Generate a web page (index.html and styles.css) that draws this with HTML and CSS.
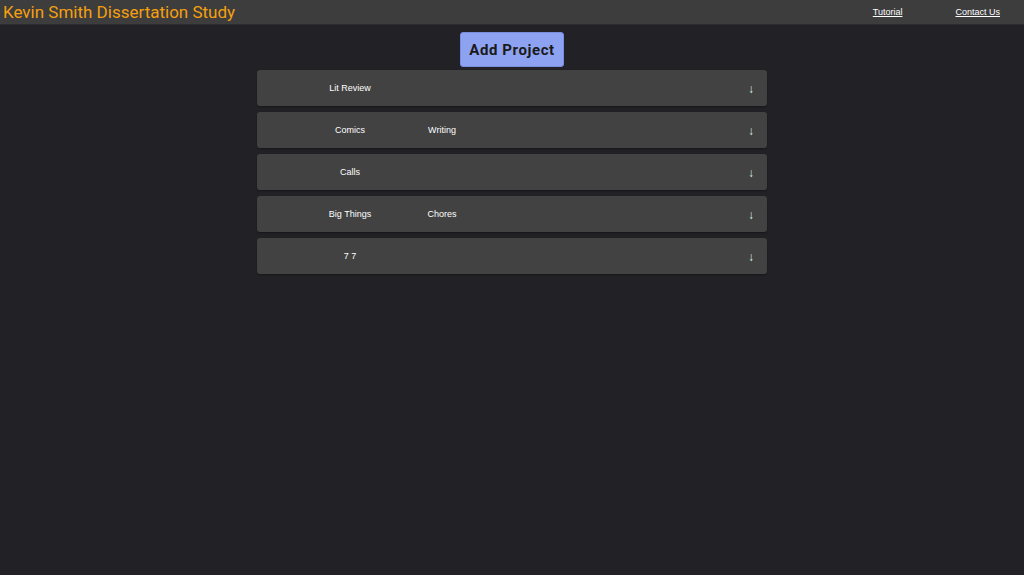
FILE: index.html
```html
<!DOCTYPE html>
<html>
<head>
<meta charset="utf-8">
<link rel="stylesheet" href="styles.css">
</head>
<body>
<header class="topbar">
  <div class="brand">Kevin Smith Dissertation Study</div>
  <nav class="links">
    <a href="#" class="link">Tutorial</a>
    <a href="#" class="link">Contact Us</a>
  </nav>
</header>
<main class="main">
  <button class="add-btn">Add Project</button>
  <div class="list">
    <div class="card"><div class="cells"><span class="cell">Lit Review</span></div><span class="arrow">↓</span></div>
    <div class="card"><div class="cells"><span class="cell">Comics</span><span class="cell">Writing</span></div><span class="arrow">↓</span></div>
    <div class="card"><div class="cells"><span class="cell">Calls</span></div><span class="arrow">↓</span></div>
    <div class="card"><div class="cells"><span class="cell">Big Things</span><span class="cell">Chores</span></div><span class="arrow">↓</span></div>
    <div class="card"><div class="cells"><span class="cell">7 7</span></div><span class="arrow">↓</span></div>
  </div>
</main>
</body>
</html>
```
FILE: styles.css
```css
html, body { margin: 0; padding: 0; }
body {
  background: #222126;
  min-height: 575px;
  font-family: "Liberation Sans", Arial, sans-serif;
}
.topbar {
  height: 24px;
  background: #3d3d3d;
  display: flex;
  align-items: center;
  justify-content: space-between;
  padding-left: 3px;
  padding-right: 24px;
  border-bottom: 1px solid #2c2c2f;
}
.brand {
  font-family: Roboto, sans-serif;
  font-size: 17px;
  color: #f5a00f;
  line-height: 24px;
}
.links {
  display: flex;
  align-items: center;
  gap: 53px;
  height: 24px;
}
.link {
  color: #ffffff;
  font-size: 9px;
  text-decoration: underline;
}
.main {
  display: flex;
  flex-direction: column;
  align-items: center;
  padding-top: 7px;
}
.add-btn {
  width: 104px;
  height: 35px;
  background: #8ea2f2;
  border: 1px solid #7a8ee0;
  border-radius: 3px;
  font-family: Roboto, sans-serif;
  font-weight: 700;
  font-size: 15px;
  letter-spacing: 0.6px;
  color: #1a1a1a;
  padding: 0;
  margin-bottom: 3px;
}
.list {
  display: flex;
  flex-direction: column;
  gap: 6px;
  width: 510px;
}
.card {
  height: 36px;
  background: #424242;
  border-radius: 3px;
  display: flex;
  align-items: center;
  justify-content: space-between;
  box-shadow: 0 1px 2px rgba(0,0,0,0.35);
}
.cells {
  display: flex;
  padding-left: 47px;
}
.cell {
  width: 92px;
  text-align: center;
  color: #ffffff;
  font-size: 9px;
}
.arrow {
  color: #d8efe0;
  font-size: 12px;
  margin-right: 13px;
  margin-top: 1px;
}
```
